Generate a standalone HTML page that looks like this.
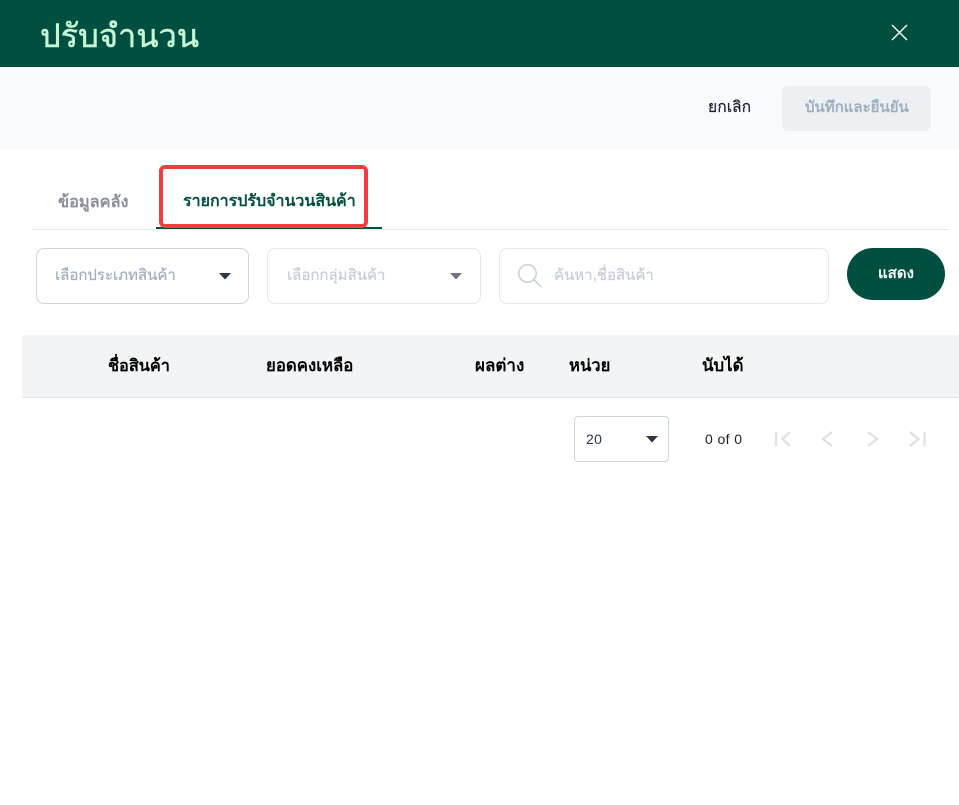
<!DOCTYPE html>
<html lang="th">
<head>
<meta charset="utf-8">
<title>ปรับจำนวน</title>
<style>
html,body{margin:0;padding:0;background:#fff;width:959px;height:805px;overflow:hidden}
body{position:relative;font-family:"Liberation Sans","Noto Sans CJK JP",sans-serif}
.a{position:absolute;box-sizing:border-box}
.t{position:absolute;white-space:nowrap;line-height:24px;height:24px}
.box{background:#fff;border-radius:8px}
svg{position:absolute;display:block}
</style>
</head>
<body>
<div class="a" style="left:0;top:0;width:959px;height:67px;background:#014f41"></div>
<div class="t" style="left:40px;top:16px;font-size:32.6px;line-height:40px;height:40px;color:#c6f6d5;-webkit-text-stroke:.5px #c6f6d5">ปรับจำนวน</div>
<svg style="left:890px;top:23px" width="18" height="18" viewBox="0 0 18 18"><path d="M2 2L17 17M17 2L2 17" stroke="#f4f6f6" stroke-width="1.5" fill="none"/></svg>

<div class="a" style="left:0;top:67px;width:959px;height:82px;background:#f9fafc"></div>
<div class="t" style="left:708px;top:96px;font-size:15.7px;color:#1a202c;-webkit-text-stroke:.2px #1a202c">ยกเลิก</div>
<div class="a" style="left:782px;top:86px;width:149px;height:45px;background:#edf0f3;border-radius:6px"></div>
<div class="t" style="left:805px;top:96px;font-size:15px;font-weight:bold;color:#a0aec0">บันทึกและยืนยัน</div>

<div class="a" style="left:31px;top:229px;width:918px;height:1px;background:#e2e8f0"></div>
<div class="t" style="left:58px;top:190px;font-size:16.3px;font-weight:bold;color:#8a909c">ข้อมูลคลัง</div>
<div class="a" style="left:156px;top:227px;width:226px;height:2px;background:#014f41"></div>
<div class="a" style="left:159px;top:165px;width:209px;height:63px;border:4px solid #f03e3e;border-radius:6px"></div>
<div class="t" style="left:183px;top:190px;font-size:16px;font-weight:bold;color:#014f41">รายการปรับจำนวนสินค้า</div>

<div class="a box" style="left:36px;top:248px;width:213px;height:56px;border:1px solid #cbd5e0"></div>
<div class="t" style="left:55px;top:264px;font-size:15px;color:#a0aec0;-webkit-text-stroke:.2px #a0aec0">เลือกประเภทสินค้า</div>
<svg style="left:219px;top:273px" width="12" height="7" viewBox="0 0 12 7"><path d="M0 0H12L6 6.5Z" fill="#2d3748"/></svg>

<div class="a box" style="left:267px;top:248px;width:214px;height:56px;border:1px solid #e2e8f0"></div>
<div class="t" style="left:287px;top:264px;font-size:15px;color:#c4ccd9;-webkit-text-stroke:.2px #c4ccd9">เลือกกลุ่มสินค้า</div>
<svg style="left:450px;top:273px" width="12" height="7" viewBox="0 0 12 7"><path d="M0 0H12L6 6.5Z" fill="#6f7681"/></svg>

<div class="a box" style="left:499px;top:248px;width:330px;height:56px;border:1px solid #e2e8f0"></div>
<svg style="left:517px;top:263px" width="26" height="26" viewBox="0 0 26 26"><circle cx="10.5" cy="10.5" r="8.7" fill="none" stroke="#c5ceda" stroke-width="1.5"/><path d="M16.8 16.8L24.5 24" stroke="#c5ceda" stroke-width="1.5" fill="none"/></svg>
<div class="t" style="left:554px;top:264px;font-size:15px;color:#c4ccd9;-webkit-text-stroke:.2px #c4ccd9">ค้นหา,ชื่อสินค้า</div>

<div class="a" style="left:847px;top:248px;width:98px;height:52px;background:#014f41;border-radius:26px"></div>
<div class="t" style="left:878px;top:262px;font-size:15px;font-weight:bold;color:#f7fafc">แสดง</div>

<div class="a" style="left:22px;top:335px;width:937px;height:63px;background:#f2f4f6;border-bottom:1px solid #e2e8f0"></div>
<div class="t" style="left:108px;top:354px;font-size:16.3px;font-weight:bold;color:#000">ชื่อสินค้า</div>
<div class="t" style="left:266px;top:354px;font-size:16.8px;font-weight:bold;color:#000">ยอดคงเหลือ</div>
<div class="t" style="left:475px;top:354px;font-size:17px;font-weight:bold;color:#000">ผลต่าง</div>
<div class="t" style="left:569px;top:354px;font-size:16.6px;font-weight:bold;color:#000">หน่วย</div>
<div class="t" style="left:702px;top:354px;font-size:16.8px;font-weight:bold;color:#000">นับได้</div>

<div class="a" style="left:574px;top:416px;width:95px;height:46px;background:#fff;border:1px solid #cbd5e0;border-radius:4px"></div>
<div class="t" style="left:586px;top:427px;font-size:14px;letter-spacing:.3px;color:#2d3748">20</div>
<svg style="left:646px;top:436px" width="12" height="7" viewBox="0 0 12 7"><path d="M0 0H12L6 6.5Z" fill="#2d3748"/></svg>
<div class="t" style="left:705px;top:427px;font-size:14px;letter-spacing:.4px;color:#1a202c">0 of 0</div>

<svg style="left:770px;top:426px" width="160" height="26" viewBox="0 0 160 26">
<g fill="none" stroke="#e0e0e0" stroke-width="2.2">
<path d="M6 6V20M20 6L12.5 13L20 20"/>
<path d="M62 6L53 13L62 20"/>
<path d="M98 6L107 13L98 20"/>
<path d="M140 6L148.5 13L140 20M154.5 6V20"/>
</g>
</svg>
</body>
</html>
